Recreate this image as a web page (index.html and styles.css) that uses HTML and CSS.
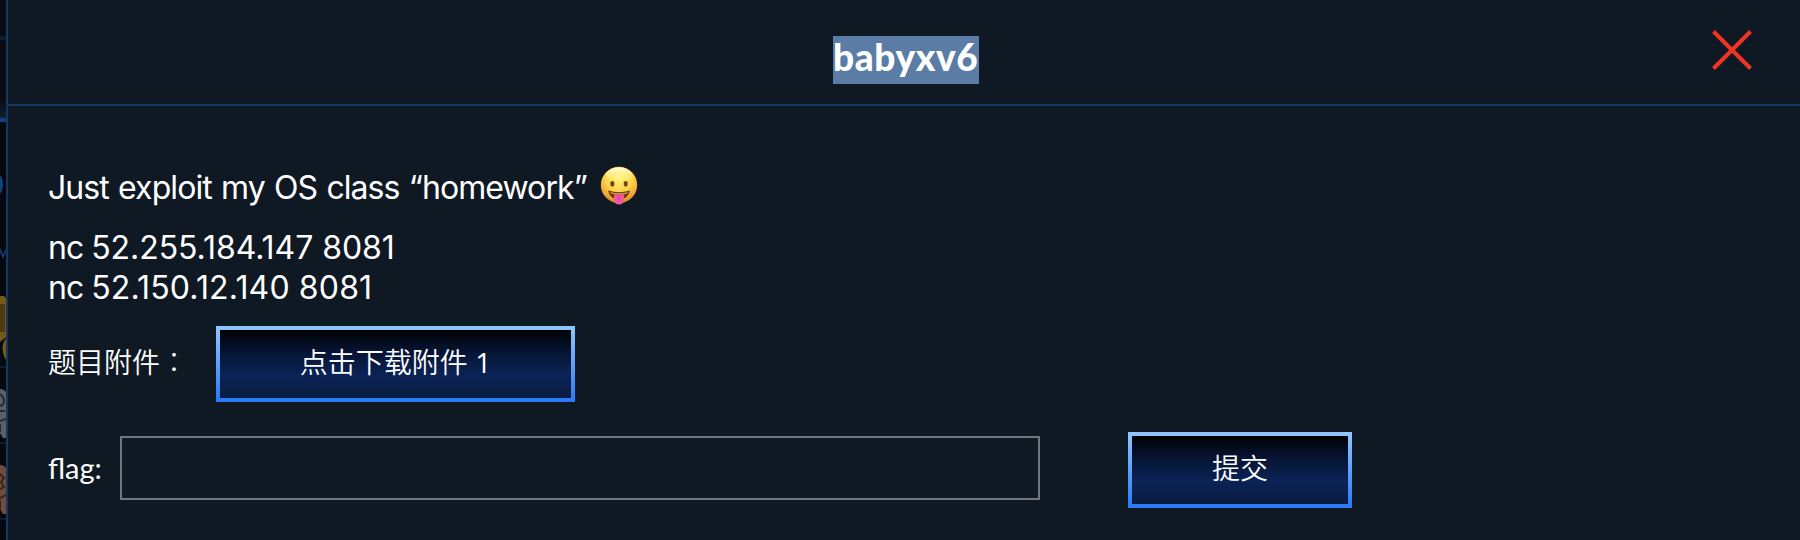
FILE: index.html
```html
<!DOCTYPE html>
<html lang="zh-CN">
<head>
<meta charset="utf-8">
<title>babyxv6</title>
<link rel="stylesheet" href="styles.css">
</head>
<body>
<div class="page">
  <svg class="backdrop" width="6" height="540" viewBox="0 0 6 540" aria-hidden="true">
    <defs>
      <linearGradient id="glow" x1="0" y1="0" x2="0" y2="1">
        <stop offset="0" stop-color="#090b0e"/>
        <stop offset="1" stop-color="#0e2038"/>
      </linearGradient>
    </defs>
    <rect width="6" height="540" fill="#04090f"/>
    <rect width="6" height="100" fill="#090b0e"/>
    <rect y="36" width="6" height="4" fill="#0b1d31"/>
    <rect y="98" width="6" height="20" fill="url(#glow)"/>
    <rect y="118" width="6" height="4" fill="#173f7c"/>
    <path d="M0 175Q3 178 3 184.500T0 194Z" fill="#173f7c"/>
    <path d="M0 249L3 257L6 250" fill="none" stroke="#173f7c" stroke-width="1.500"/>
    <path d="M0 296H4L6 298V337L0 342Z" fill="#74591b"/>
    <rect y="304" width="5" height="28" fill="#4c3b14"/>
    <path d="M6 338Q-1 348 6 360" fill="#74591b"/>
    <path d="M0 389Q4 389 6 392V438H3L0 433Z" fill="#596067"/>
    <path d="M0 394Q4 397 4 401T0 406M0 411H5M0 421L6 419M0 432V424" fill="none" stroke="#252c33" stroke-width="2"/>
    <path d="M0 465Q4 465 6 468V514H3L0 509Z" fill="#704b3e"/>
    <path d="M0 474L4 478L1 482L4 487L0 489M0 498L6 495M0 509V500" fill="none" stroke="#33251f" stroke-width="2"/>
    <path d="M0 367H6M0 443H6M0 519H6" stroke="#0b1d31" stroke-width="2"/>
  </svg>
  <main class="modal">
    <header class="modal-header">
      <h1 class="title">babyxv6</h1>
      <button class="close" aria-label="关闭">
        <svg width="40" height="40" viewBox="0 0 40 40"><path d="M1.500 1.500L38.500 38.500M38.500 1.500L1.500 38.500" stroke="#f03322" stroke-width="4" fill="none"/></svg>
      </button>
    </header>
    <section class="content">
      <p class="line intro"><span class="intro-text">Just exploit my OS class “homework”</span>
        <svg class="emoji" width="38" height="40" viewBox="0 0 38 40" role="img" aria-label="😛">
          <defs>
            <radialGradient id="face" cx=".5" cy=".3" r=".7">
              <stop offset="0" stop-color="#fff477"/>
              <stop offset=".55" stop-color="#fbd24c"/>
              <stop offset=".85" stop-color="#efa032"/>
              <stop offset="1" stop-color="#dc7e20"/>
            </radialGradient>
            <linearGradient id="shine" x1="0" y1="0" x2="0" y2="1">
              <stop offset="0" stop-color="#fffbe0"/>
              <stop offset="1" stop-color="#fff477" stop-opacity="0"/>
            </linearGradient>
          </defs>
          <circle cx="19" cy="19" r="18.200" fill="url(#face)"/>
          <ellipse cx="19" cy="9" rx="13" ry="7.500" fill="url(#shine)"/>
          <ellipse cx="12.300" cy="17.700" rx="2" ry="2.800" fill="#6e4212"/>
          <ellipse cx="25.700" cy="17.700" rx="2" ry="2.800" fill="#6e4212"/>
          <path d="M8 24.500Q19 28 30 24.500Q28 33.500 19 33.500T8 24.500Z" fill="#70370e"/>
          <path d="M10 26Q19 28.500 28 26L27.300 27.500Q19 30 10.700 27.500Z" fill="#d99a4a"/>
          <path d="M14 29Q16.500 27.500 19 29Q21.500 27.500 24 29V33.500Q24 38.600 19 38.600T14 33.500Z" fill="#ee5a9c"/>
          <path d="M19 29.500V34" stroke="#cf387c" stroke-width="1"/>
        </svg>
      </p>
      <p class="line hosts"><span class="cmd">nc </span><span class="host-a">52.255.184.147 8081</span><br><span class="cmd">nc </span><span class="host-b">52.150.12.140 8081</span></p>
      <div class="row attachment">
        <span class="label">题目附件<span class="colon" lang="zh-TW">：</span></span>
        <button class="btn download">点击下载附件 <span class="num">1</span></button>
      </div>
      <form class="row answer">
        <label class="flag-label" for="flag">flag:</label>
        <input class="flag-input" id="flag" type="text">
        <button class="btn submit" type="button">提交</button>
      </form>
    </section>
  </main>
</div>
</body>
</html>
```
FILE: styles.css
```css
* { box-sizing: border-box; }
body { margin: 0; background: #0f1924; color: #fff; overflow: hidden; }
.page { display: flex; width: 1800px; height: 540px; }
.backdrop { display: block; flex: none; }
.modal { flex: 1; border-left: 2px solid #153862; background: #0f1924; }
.modal-header {
  position: relative;
  display: flex;
  justify-content: center;
  height: 106px;
  padding-top: 36px;
  border-bottom: 2px solid #153862;
}
.title {
  width: 146px;
  height: 48px;
  margin: 0 0 0 4px;
  background: #5b7ca5;
  font: 900 37px/41px Lato, sans-serif;
  letter-spacing: .6px;
  white-space: nowrap;
}
.close {
  position: absolute;
  top: 30px;
  right: 48px;
  width: 40px;
  height: 40px;
  padding: 0;
  border: 0;
  background: none;
}
.close svg { display: block; }
.content { padding: 60px 40px 0; }
.line { margin: 0; font: 400 32px/40px Inter, sans-serif; }
.intro { display: flex; height: 41px; gap: 13px; }
.intro-text { width: 539px; line-height: 43px; letter-spacing: -.93px; word-spacing: 1.2px; white-space: nowrap; }
.emoji { display: block; flex: none; }
.hosts { margin-top: 21px; }
.cmd { letter-spacing: -1px; }
.host-a { letter-spacing: -.06px; }
.host-b { letter-spacing: .15px; }
.row { display: flex; align-items: center; }
.attachment { margin-top: 18px; }
.label, .btn { font: 350 28px/40px Lato, "Noto Sans CJK SC", sans-serif; }
.label { width: 168px; height: 46px; white-space: nowrap; }
.colon { font-family: "Noto Sans CJK TC", sans-serif; font-weight: 300; }
.num { font-family: "Open Sans", sans-serif; font-weight: 400; }
.btn {
  height: 76px;
  padding: 0 0 4px;
  border: 4px solid;
  border-image: linear-gradient(#91c7ff, #2879f8) 4;
  background: linear-gradient(#000204 0%, #061330 30%, #0a2355 65%, #0a1f4b 85%, #091b41 100%);
  color: #fff;
}
.download { width: 359px; }
.answer { align-items: flex-start; margin-top: 30px; }
.flag-label { width: 72px; padding-top: 16px; font: 400 29px/40px Lato, sans-serif; }
.flag-input {
  width: 920px;
  height: 64px;
  margin-top: 4px;
  border: 2px solid #70767c;
  border-radius: 0;
  background: transparent;
  color: #fff;
  font: 28px Lato, sans-serif;
}
.submit { width: 224px; margin-left: 88px; }
```
